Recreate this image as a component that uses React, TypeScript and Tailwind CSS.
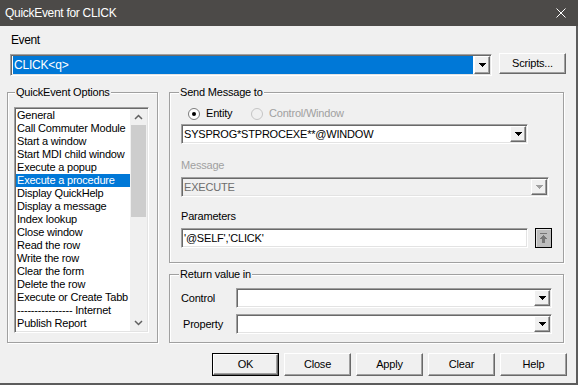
import React from "react";

const sunken =
  "border border-t-[#a0a0a0] border-l-[#a0a0a0] border-b-white border-r-white shadow-[inset_1px_1px_0_#696969,inset_-1px_-1px_0_#e3e3e3] p-[1px]";
const raised =
  "bg-[#f0f0f0] border border-t-white border-l-white border-b-[#696969] border-r-[#696969] shadow-[inset_-1px_-1px_0_#a0a0a0]";

const Arrow = ({ color = "#000" }: { color?: string }) => (
  <svg width="7" height="4" viewBox="0 0 7 4" shapeRendering="crispEdges">
    <rect x="0" y="0" width="7" height="1" fill={color} />
    <rect x="1" y="1" width="5" height="1" fill={color} />
    <rect x="2" y="2" width="3" height="1" fill={color} />
    <rect x="3" y="3" width="1" height="1" fill={color} />
  </svg>
);

const DropBtn = ({ disabled }: { disabled?: boolean }) => (
  <div className={`w-[16px] h-full shrink-0 flex items-center justify-center ${raised}`}>
    <Arrow color={disabled ? "#a0a0a0" : "#000"} />
  </div>
);

const Combo = ({
  className,
  text,
  disabled,
}: {
  className: string;
  text?: string;
  disabled?: boolean;
}) => (
  <div className={`${sunken} ${className} ${disabled ? "bg-[#f0f0f0]" : "bg-white"} flex`}>
    <div
      className={`flex-1 flex items-center pl-[1px] overflow-hidden whitespace-nowrap ${
        disabled ? "text-[#6d6d6d]" : "text-black"
      }`}
    >
      {text}
    </div>
    <DropBtn disabled={disabled} />
  </div>
);

const Radio = ({ checked, disabled }: { checked?: boolean; disabled?: boolean }) => (
  <svg width="12" height="12" viewBox="0 0 12 12">
    <circle
      cx="6"
      cy="6"
      r="5.5"
      fill={disabled ? "#f0f0f0" : "#fff"}
      stroke={disabled ? "#c4c4c4" : "#7a7a7a"}
    />
    {checked && <circle cx="6" cy="6" r="2" fill="#000" />}
  </svg>
);

const Chevron = ({ up }: { up?: boolean }) => (
  <svg width="9" height="6" viewBox="0 0 9 6">
    <polyline
      points={up ? "1,5 4.5,1.5 8,5" : "1,1 4.5,4.5 8,1"}
      fill="none"
      stroke="#606060"
      strokeWidth="1.5"
    />
  </svg>
);

const Btn = ({ label, def }: { label: string; def?: boolean }) =>
  def ? (
    <div className="w-[67px] h-[23px] border border-black">
      <div className={`w-full h-full ${raised} flex items-center justify-center`}>{label}</div>
    </div>
  ) : (
    <div className={`w-[67px] h-[23px] ${raised} flex items-center justify-center`}>{label}</div>
  );

const items = [
  "General",
  "Call Commuter Module",
  "Start a window",
  "Start MDI child window",
  "Execute a popup",
  "Execute a procedure",
  "Display QuickHelp",
  "Display a message",
  "Index lookup",
  "Close window",
  "Read the row",
  "Write the row",
  "Clear the form",
  "Delete the row",
  "Execute or Create Tabb",
  "---------------- Internet",
  "Publish Report",
  "Publish Screen",
];

const groupCls =
  "border border-[#a0a0a0] shadow-[inset_1px_1px_0_#fff,1px_1px_0_#fff] min-w-0 m-0 p-0";

export default function App() {
  return (
    <div className="w-[578px] h-[385px] flex flex-col bg-[#f0f0f0] font-['Liberation_Sans',Arial,sans-serif] text-[11px] tracking-[-0.2px] text-black overflow-hidden">
      {/* Title bar */}
      <div className="h-[26px] shrink-0 bg-[#4c4a48] flex items-center justify-between pl-[5px] pr-[12px]">
        <span className="text-[12px] tracking-[-0.3px] text-white">QuickEvent for CLICK</span>
        <svg width="10" height="10" viewBox="0 0 10 10">
          <path d="M0.5 0.5 L9.5 9.5 M9.5 0.5 L0.5 9.5" stroke="#fff" strokeWidth="1" />
        </svg>
      </div>

      {/* Body */}
      <div className="flex-1 flex flex-col border-r-2 border-b-2 border-[#5c5c5c]">
        <div className="mt-[7px] pl-[11px] h-[14px] leading-[14px] text-[12px] tracking-[-0.4px]">
          Event
        </div>

        <div className="mt-[6px] flex items-start pl-[10px] h-[23px]">
          <div className={`${sunken} mt-[1px] w-[482px] h-[22px] bg-white flex`}>
            <div className="flex-1 ml-[1px] mr-[1px] bg-[#0078d7] text-white text-[12px] tracking-[-0.2px] flex items-center pl-[1px]">
              CLICK&lt;q&gt;
            </div>
            <DropBtn />
          </div>
          <div className={`ml-[7px] w-[67px] h-[21px] ${raised} flex items-center justify-center`}>
            Scripts...
          </div>
        </div>

        {/* Main */}
        <div className="mt-[10px] flex pl-[7px] h-[257px]">
          <fieldset className={`${groupCls} w-[151px] h-[257px]`}>
            <legend className="ml-[7px] px-[1px] bg-[#f0f0f0] leading-[13px]">QuickEvent Options</legend>
            <div className={`${sunken} ml-[6px] mt-[8px] w-[135px] h-[226px] bg-white flex`}>
              <div className="flex-1 overflow-hidden">
                {items.map((it) => (
                  <div
                    key={it}
                    className={`h-[13px] leading-[13px] pl-[1px] whitespace-nowrap ${
                      it === "Execute a procedure" ? "bg-[#0078d7] text-white" : ""
                    }`}
                  >
                    {it}
                  </div>
                ))}
              </div>
              <div className="w-[17px] bg-[#f0f0f0] flex flex-col">
                <div className="h-[16px] flex items-center justify-center">
                  <Chevron up />
                </div>
                <div className="h-[92px] mx-[1px] bg-[#cdcdcd]" />
                <div className="flex-1" />
                <div className="h-[16px] flex items-center justify-center">
                  <Chevron />
                </div>
              </div>
            </div>
          </fieldset>

          <div className="ml-[11px] w-[395px] flex flex-col">
            <fieldset className={`${groupCls} w-[395px] h-[177px]`}>
              <legend className="ml-[9px] px-[1px] bg-[#f0f0f0] leading-[13px]">Send Message to</legend>
              <div className="mt-[8px] h-[13px] flex items-center pl-[18px]">
                <div className="w-[63px] flex items-center gap-[6px]">
                  <Radio checked />
                  <span>Entity</span>
                </div>
                <div className="flex items-center gap-[6px] text-[#a0a0a0]">
                  <Radio disabled />
                  <span>Control/Window</span>
                </div>
              </div>
              <div className="mt-[4px] ml-[11px]">
                <Combo className="w-[347px] h-[20px]" text="SYSPROG*STPROCEXE**@WINDOW" />
              </div>
              <div className="mt-[15px] pl-[11px] h-[13px] leading-[13px] text-[#a0a0a0]">Message</div>
              <div className="mt-[5px] ml-[11px]">
                <Combo className="w-[368px] h-[20px]" text="EXECUTE" disabled />
              </div>
              <div className="mt-[13px] pl-[11px] h-[13px] leading-[13px]">Parameters</div>
              <div className="mt-[5px] ml-[11px] flex items-center">
                <div className={`${sunken} w-[347px] h-[20px] bg-white flex items-center pl-[2px] whitespace-nowrap`}>
                  '@SELF','CLICK'
                </div>
                <div className="ml-[7px] w-[17px] h-[20px] border border-black bg-[#bdbdbd] shadow-[inset_1px_1px_0_#e0e0e0] flex items-center justify-center">
                  <svg width="9" height="11" viewBox="0 0 9 11" shapeRendering="crispEdges" fill="#777">
                    <rect x="1" y="0" width="7" height="1" />
                    <rect x="4" y="2" width="1" height="1" />
                    <rect x="3" y="3" width="3" height="1" />
                    <rect x="2" y="4" width="5" height="1" />
                    <rect x="1" y="5" width="7" height="1" />
                    <rect x="3" y="6" width="3" height="4" />
                  </svg>
                </div>
              </div>
            </fieldset>

            <fieldset className={`${groupCls} mt-[5px] w-[395px] h-[75px]`}>
              <legend className="ml-[9px] px-[1px] bg-[#f0f0f0] leading-[13px]">Return value in</legend>
              <div className="mt-[7px] flex items-center h-[20px] pl-[11px]">
                <span className="w-[55px]">Control</span>
                <Combo className="w-[316px] h-[20px]" />
              </div>
              <div className="mt-[6px] flex items-center h-[20px] pl-[13px]">
                <span className="w-[53px]">Property</span>
                <Combo className="w-[316px] h-[20px]" />
              </div>
            </fieldset>
          </div>
        </div>

        {/* Buttons */}
        <div className="mt-[10px] flex justify-end gap-[5px] pr-[9px]">
          <Btn label="OK" def />
          <Btn label="Close" />
          <Btn label="Apply" />
          <Btn label="Clear" />
          <Btn label="Help" />
        </div>
      </div>
    </div>
  );
}
